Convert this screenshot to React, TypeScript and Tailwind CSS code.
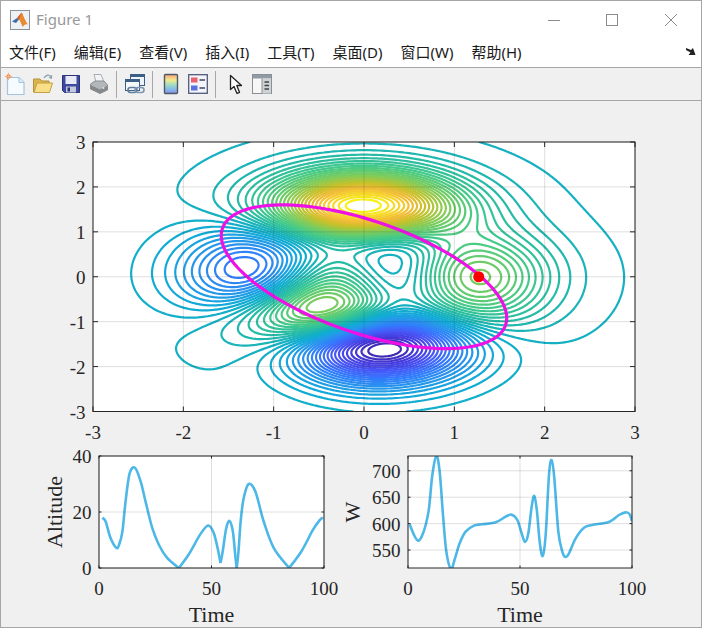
import type { ReactNode } from 'react';

const PARULA: [number, number, number, number][] = [
  [0, 0.2422, 0.1504, 0.6603],
  [0.08, 0.2751, 0.2342, 0.871],
  [0.16, 0.2795, 0.3447, 0.9717],
  [0.25, 0.1963, 0.4847, 0.9892],
  [0.33, 0.154, 0.5902, 0.9218],
  [0.4, 0.07, 0.67, 0.85],
  [0.45, 0.08, 0.69, 0.76],
  [0.52, 0.16, 0.74, 0.64],
  [0.6, 0.2809, 0.7964, 0.5266],
  [0.7, 0.5044, 0.7993, 0.348],
  [0.8, 0.78, 0.76, 0.16],
  [0.87, 0.95, 0.73, 0.22],
  [0.95, 0.97, 0.87, 0.15],
  [1, 0.9763, 0.9831, 0.0538],
];

function parula(t: number) {
  let i = 0;
  while (i < PARULA.length - 2 && t > PARULA[i + 1][0]) i++;
  const a = PARULA[i];
  const b = PARULA[i + 1];
  const f = (t - a[0]) / (b[0] - a[0]);
  const c = [1, 2, 3].map(k => Math.round((a[k] + (b[k] - a[k]) * f) * 255));
  return `rgb(${c[0]},${c[1]},${c[2]})`;
}

function peaks(x: number, y: number) {
  return (
    3 * (1 - x) ** 2 * Math.exp(-(x ** 2) - (y + 1) ** 2) -
    10 * (x / 5 - x ** 3 - y ** 5) * Math.exp(-(x ** 2) - y ** 2) -
    (1 / 3) * Math.exp(-((x + 1) ** 2) - y ** 2)
  );
}

const W_MAIN = 542;
const H_MAIN = 269.5;
const ZMIN = -6.5466;
const ZMAX = 8.0752;
const LEVEL_SHIFT = 0.012;
const N = 180;

function buildContours() {
  const grid: number[][] = [];
  for (let j = 0; j <= N; j++) {
    const row: number[] = [];
    for (let i = 0; i <= N; i++) row.push(peaks(-3 + (6 * i) / N, -3 + (6 * j) / N));
    grid.push(row);
  }
  const px = (i: number) => ((i / N) * W_MAIN).toFixed(2);
  const py = (j: number) => (H_MAIN - (j / N) * H_MAIN).toFixed(2);
  const out: { d: string; color: string }[] = [];
  for (let k = 1; k <= 50; k++) {
    const lv = ZMIN + ((ZMAX - ZMIN) * k) / 51 + LEVEL_SHIFT;
    const parts: string[] = [];
    for (let j = 0; j < N; j++) {
      for (let i = 0; i < N; i++) {
        const a = grid[j][i];
        const b = grid[j][i + 1];
        const c = grid[j + 1][i + 1];
        const d = grid[j + 1][i];
        const pts: string[] = [];
        if (a < lv !== b < lv) pts.push(`${px(i + (lv - a) / (b - a))} ${py(j)}`);
        if (b < lv !== c < lv) pts.push(`${px(i + 1)} ${py(j + (lv - b) / (c - b))}`);
        if (c < lv !== d < lv) pts.push(`${px(i + (lv - d) / (c - d))} ${py(j + 1)}`);
        if (d < lv !== a < lv) pts.push(`${px(i)} ${py(j + (lv - a) / (d - a))}`);
        if (pts.length === 2) parts.push(`M${pts[0]}L${pts[1]}`);
        if (pts.length === 4) parts.push(`M${pts[0]}L${pts[1]}M${pts[2]}L${pts[3]}`);
      }
    }
    out.push({ d: parts.join(''), color: parula((lv - ZMIN) / (ZMAX - ZMIN)) });
  }
  return out;
}

const CONTOURS = buildContours();

function ellipsePath() {
  let d = '';
  for (let a = 0; a <= 360; a += 3) {
    const t = (a * Math.PI) / 180;
    const x = 1.58 * Math.cos(t);
    const y = 1.6 * Math.cos(t + (125 * Math.PI) / 180);
    d += `${a ? 'L' : 'M'}${(((x + 3) / 6) * W_MAIN).toFixed(2)} ${(((3 - y) / 6) * H_MAIN).toFixed(2)}`;
  }
  return d + 'Z';
}

// smooth line through traced points
function smooth(points: number[][]) {
  let d = `M${points[0][0]} ${points[0][1]}`;
  for (let i = 0; i < points.length - 1; i++) {
    const p0 = points[Math.max(i - 1, 0)];
    const p1 = points[i];
    const p2 = points[i + 1];
    const p3 = points[Math.min(i + 2, points.length - 1)];
    const c1 = [p1[0] + (p2[0] - p0[0]) / 6, p1[1] + (p2[1] - p0[1]) / 6];
    const c2 = [p2[0] - (p3[0] - p1[0]) / 6, p2[1] - (p3[1] - p1[1]) / 6];
    d += `C${c1[0].toFixed(2)} ${c1[1].toFixed(2)} ${c2[0].toFixed(2)} ${c2[1].toFixed(2)} ${p2[0]} ${p2[1]}`;
  }
  return d;
}

const ALT_SEGMENTS = [
  [[1.5, 18], [3, 16.5], [5, 11], [7.7, 7.2], [9, 8.5], [10.4, 13], [11.8, 23.7], [13.6, 33.8], [16, 35.8], [18.5, 30.9], [20.7, 23.7], [23.7, 14.2], [26.6, 8.3], [30.3, 3.6], [35.5, 0]],
  [[35.5, 0], [40, 5], [45, 12], [48.5, 15.2], [51, 12.5], [53, 6], [54, 1.8]],
  [[54, 1.8], [55, 6], [56.5, 14], [58, 16.8], [59.5, 13], [60.5, 5], [61.2, 0]],
  [[61.2, 0], [62, 6], [63, 17], [64.3, 24.9], [66.5, 30], [69.5, 27.3], [73.2, 16.6], [77.7, 7.1], [84.5, 0]],
  [[84.5, 0], [90, 6], [95, 13.5], [98, 17], [99.5, 18]],
];

// traced in 3x crop pixels, converted to data below
const W_TRACE = [
  [222, 238], [235, 270], [247, 287], [258, 275], [270, 240], [280, 190], [290, 90], [302, 33], [312, 80], [322, 210],
  [332, 320], [346, 372], [358, 340], [372, 295], [390, 260], [415, 242], [440, 238], [480, 232], [510, 215], [528, 209],
  [545, 225], [558, 265], [568, 291], [578, 265], [588, 185], [596, 153], [604, 200], [612, 290], [621, 333], [630, 270],
  [640, 90], [648, 45], [656, 100], [668, 260], [680, 320], [689, 336], [700, 325], [720, 280], [745, 248], [770, 240],
  [820, 231], [850, 210], [870, 202], [882, 208], [889, 228],
];

type AxesProps = {
  w: number;
  h: number;
  xlim: [number, number];
  ylim: [number, number];
  xticks: number[];
  yticks: number[];
  tick: number;
  xlabel?: string;
  ylabel?: string;
  ylabelX?: number;
  clipId: string;
  className: string;
  children: ReactNode;
};

function Axes({ w, h, xlim, ylim, xticks, yticks, tick, xlabel, ylabel, ylabelX, clipId, className, children }: AxesProps) {
  const sx = (v: number) => ((v - xlim[0]) / (xlim[1] - xlim[0])) * w;
  const sy = (v: number) => h - ((v - ylim[0]) / (ylim[1] - ylim[0])) * h;
  return (
    <svg width={w} height={h} viewBox={`0 0 ${w} ${h}`} className={`block shrink-0 overflow-visible font-['Liberation_Serif'] ${className}`}>
      <defs>
        <clipPath id={clipId}>
          <rect width={w} height={h} />
        </clipPath>
      </defs>
      <rect width={w} height={h} fill="#fff" />
      <g clipPath={`url(#${clipId})`}>{children}</g>
      <g stroke="#262626" strokeOpacity="0.15" strokeWidth="1">
        {xticks.map(t => <line key={t} x1={sx(t)} x2={sx(t)} y1="0" y2={h} />)}
        {yticks.map(t => <line key={t} y1={sy(t)} y2={sy(t)} x1="0" x2={w} />)}
      </g>
      <g stroke="#262626" strokeWidth="1">
        {xticks.map(t => (
          <g key={t}>
            <line x1={sx(t)} x2={sx(t)} y1={h} y2={h - tick} />
            <line x1={sx(t)} x2={sx(t)} y1="0" y2={tick} />
          </g>
        ))}
        {yticks.map(t => (
          <g key={t}>
            <line y1={sy(t)} y2={sy(t)} x1="0" x2={tick} />
            <line y1={sy(t)} y2={sy(t)} x1={w} x2={w - tick} />
          </g>
        ))}
      </g>
      <rect x="0" y="0" width={w} height={h} fill="none" stroke="#262626" strokeWidth="1" />
      <g className="fill-[#262626] text-[19px]">
        {xticks.map(t => <text key={t} x={sx(t)} y={h + 27} textAnchor="middle">{t}</text>)}
        {yticks.map(t => <text key={t} x={-7.5} y={sy(t) + 7} textAnchor="end">{t}</text>)}
      </g>
      {xlabel && <text x={w / 2} y={h + 54} textAnchor="middle" className="fill-[#262626] text-[22px]">{xlabel}</text>}
      {ylabel && (
        <text transform={`translate(${ylabelX} ${h / 2}) rotate(-90)`} textAnchor="middle" className="fill-[#262626] text-[22px]">
          {ylabel}
        </text>
      )}
    </svg>
  );
}

function MatlabLogo() {
  return (
    <svg width="20" height="20" viewBox="0 0 20 20">
      <rect x="0.5" y="0.5" width="19" height="19" fill="#eef1f5" stroke="#8d9096" />
      <path d="M2 11.5 L7 8 L9 9.5 L6 13 Z" fill="#3f6fa8" />
      <path d="M7 8 L11.5 2.5 L13 5 L10 10 L9 9.5 Z" fill="#d8542a" />
      <path d="M11.5 2.5 C13.5 5 15 11 18 14.5 C15.5 13.5 14 15 12.5 17 C11.5 14 10.5 11.5 9 9.5 Z" fill="#e98a2c" />
    </svg>
  );
}

function NewIcon() {
  return (
    <svg width="22" height="24" viewBox="0 0 22 24">
      <path d="M3.5 5.5 H15 L20 10.5 V22.5 H3.5 Z" fill="#f6fbff" stroke="#a5c3dc" strokeWidth="1.2" />
      <path d="M15 5.5 V10.5 H20" fill="#dcecf7" stroke="#a5c3dc" />
      <circle cx="4.5" cy="4.5" r="2.2" fill="#ee8a4a" />
      <path d="M4.5 0.8 V8.2 M0.8 4.5 H8.2" stroke="#f3b27f" strokeWidth="1" />
    </svg>
  );
}

function OpenIcon() {
  return (
    <svg width="22" height="22" viewBox="0 0 22 22">
      <path d="M1.5 6 H8 L10 8 H17 V19 H1.5 Z" fill="#dcb44c" stroke="#b3913b" />
      <path d="M2 19.5 L5 10 H20.5 L17.5 19.5 Z" fill="#f7de87" stroke="#c2a043" />
      <path d="M12 5 C14 1.5 17 1.5 19 3.5" fill="none" stroke="#8fa3ad" strokeWidth="1.4" />
      <path d="M20.2 1.8 L20 6 L16.5 4.8 Z" fill="#8fa3ad" />
    </svg>
  );
}

function SaveIcon() {
  return (
    <svg width="20" height="20" viewBox="0 0 20 20">
      <path d="M1.5 1.5 H18.5 V18.5 H3.5 L1.5 16.5 Z" fill="#3e4aa0" stroke="#2b3378" />
      <rect x="4.5" y="2" width="11" height="8" fill="#e8ebf6" />
      <rect x="5" y="12.5" width="10" height="6" fill="#c4c8dc" />
      <rect x="6.5" y="13.5" width="2.5" height="4" fill="#2b3378" />
    </svg>
  );
}

function PrintIcon() {
  return (
    <svg width="20" height="22" viewBox="0 0 20 22">
      <path d="M5 1.5 H12 L15 9 H7 Z" fill="#f2f4f6" stroke="#a9adb1" />
      <path d="M1.5 11 L6 8 H15 L18.5 12 V17 L11 20.5 L1.5 16 Z" fill="#b4b7ba" stroke="#8b8e91" />
      <path d="M1.5 12 L11 16.5 L18.5 12.5 V16.5 L11 20.5 L1.5 16 Z" fill="#86898c" />
      <circle cx="14.5" cy="15" r="0.9" fill="#e6e8ea" />
    </svg>
  );
}

function LinkIcon() {
  return (
    <svg width="22" height="22" viewBox="0 0 22 22">
      <rect x="6.5" y="1.5" width="14" height="11" fill="#eef3f8" stroke="#3d5f85" />
      <rect x="6.5" y="1.5" width="14" height="2.5" fill="#3d5f85" />
      <rect x="1.5" y="6.5" width="14" height="11" fill="#f5f8fb" stroke="#3d5f85" />
      <rect x="1.5" y="6.5" width="14" height="2.5" fill="#3d5f85" />
      <rect x="4" y="14.5" width="9" height="5" rx="2.5" fill="none" stroke="#5e7c9c" strokeWidth="1.6" />
      <rect x="11" y="14.5" width="9" height="5" rx="2.5" fill="none" stroke="#7f96ae" strokeWidth="1.6" />
    </svg>
  );
}

function ColorbarIcon() {
  return (
    <svg width="16" height="22" viewBox="0 0 16 22">
      <defs>
        <linearGradient id="cb-grad" x1="0" y1="0" x2="0" y2="1">
          <stop offset="0" stopColor="#f8a27a" />
          <stop offset="0.3" stopColor="#f3ea8e" />
          <stop offset="0.55" stopColor="#9fdcc4" />
          <stop offset="0.8" stopColor="#83b6ee" />
          <stop offset="1" stopColor="#8c8ce0" />
        </linearGradient>
      </defs>
      <rect x="1.5" y="1.5" width="13" height="19" rx="1" fill="url(#cb-grad)" stroke="#4d5a68" strokeWidth="1.4" />
    </svg>
  );
}

function LegendIcon() {
  return (
    <svg width="20" height="20" viewBox="0 0 20 20">
      <rect x="0.7" y="0.7" width="18.6" height="18.6" fill="#f4f5fa" stroke="#4f5a7a" strokeWidth="1.3" />
      <rect x="3" y="3.5" width="6.5" height="5" fill="#e8606a" />
      <rect x="3" y="11.5" width="6.5" height="5" fill="#5a6fe0" />
      <path d="M11.5 6 H17 M11.5 14 H17" stroke="#3c4660" strokeWidth="1.6" />
    </svg>
  );
}

function CursorIcon() {
  return (
    <svg width="14" height="21" viewBox="0 0 14 21">
      <path d="M1.5 1.5 V15.5 L5 12.5 L8 19.5 L10.5 18.3 L7.8 11.5 L12.5 11.5 Z" fill="#fff" stroke="#222" strokeWidth="1.3" strokeLinejoin="round" />
    </svg>
  );
}

function BrowserIcon() {
  return (
    <svg width="20" height="20" viewBox="0 0 20 20">
      <rect x="0.5" y="0.5" width="19" height="19" fill="#f7f7f7" stroke="#8a9097" />
      <rect x="1" y="1" width="18" height="3.5" fill="#8f9aa5" />
      <rect x="10" y="4.5" width="9" height="15" fill="#cfd2d5" />
      <path d="M10 4.5 V19.5" stroke="#8a9097" />
      <path d="M12.5 8 H17 M12.5 11.5 H17 M12.5 15 H17" stroke="#3f4347" strokeWidth="1.4" />
    </svg>
  );
}

function Sep({ className }: { className: string }) {
  return <div className={`w-px h-[27px] bg-[#a8a8a8] shrink-0 ${className}`} />;
}

function Tool({ className, children }: { className: string; children: ReactNode }) {
  return <div className={`w-[22px] h-[26px] flex items-center justify-center shrink-0 ${className}`}>{children}</div>;
}

const MENUS = ['文件(F)', '编辑(E)', '查看(V)', '插入(I)', '工具(T)', '桌面(D)', '窗口(W)', '帮助(H)'];

export default function App() {
  const altScale = (s: number[][]) => s.map(([t, a]) => [(t / 100) * 225, 112 - (a / 40) * 112]);
  const wScale = W_TRACE.map(([x, y]) => [(x - 217) / 3, (y - 33) / 3]);

  return (
    <div className="w-[702px] h-[628px] overflow-hidden border border-[#a6a6a6] bg-[#f0f0f0] flex flex-col font-['Noto_Sans','Noto_Sans_CJK_SC',sans-serif]">
      <div className="h-[37px] bg-white flex items-center shrink-0">
        <div className="ml-[9px] mt-[1px]"><MatlabLogo /></div>
        <span className="ml-[6px] text-[15px] text-[#999999]">Figure 1</span>
        <div className="ml-auto mr-[1px] flex items-center">
          <div className="w-[58.5px] flex justify-center">
            <svg width="12" height="12" viewBox="0 0 12 12"><path d="M0 6.5 H12" stroke="#8c8c8c" /></svg>
          </div>
          <div className="w-[58.5px] flex justify-center">
            <svg width="12" height="12" viewBox="0 0 12 12"><rect x="0.5" y="0.5" width="11" height="11" fill="none" stroke="#8c8c8c" /></svg>
          </div>
          <div className="w-[58.5px] flex justify-center">
            <svg width="12" height="12" viewBox="0 0 12 12"><path d="M0 0 L12 12 M12 0 L0 12" stroke="#8c8c8c" /></svg>
          </div>
        </div>
      </div>

      <div className="h-[30px] bg-white border-b border-[#a6a6a6] flex items-center pl-[8px] pr-[5px] shrink-0 text-[15px] text-[#1a1a1a]">
        <div className="flex gap-[18px] mt-[-1px]">
          {MENUS.map(m => <span key={m} className="whitespace-nowrap">{m}</span>)}
        </div>
        <svg className="ml-auto mb-[2px]" width="10" height="9" viewBox="0 0 10 9">
          <path d="M0 1 L5 3 L7 1 L9.5 8 L2.5 8 L4.5 5.5 L0 3 Z" fill="#222" />
        </svg>
      </div>

      <div className="h-[33px] border-b border-[#a6a6a6] flex items-center shrink-0">
        <Tool className="ml-[3px]"><NewIcon /></Tool>
        <Tool className="ml-[6px]"><OpenIcon /></Tool>
        <Tool className="ml-[6px]"><SaveIcon /></Tool>
        <Tool className="ml-[6px]"><PrintIcon /></Tool>
        <Sep className="ml-[6px]" />
        <Tool className="ml-[7px]"><LinkIcon /></Tool>
        <Sep className="ml-[6px]" />
        <Tool className="ml-[7px]"><ColorbarIcon /></Tool>
        <Tool className="ml-[5px]"><LegendIcon /></Tool>
        <Sep className="ml-[6px]" />
        <Tool className="ml-[9px]"><CursorIcon /></Tool>
        <Tool className="ml-[4px]"><BrowserIcon /></Tool>
      </div>

      <div className="flex-1 flex flex-col">
        <Axes
          w={W_MAIN}
          h={H_MAIN}
          xlim={[-3, 3]}
          ylim={[-3, 3]}
          xticks={[-3, -2, -1, 0, 1, 2, 3]}
          yticks={[-3, -2, -1, 0, 1, 2, 3]}
          tick={5}
          clipId="clip-main"
          className="ml-[91.5px] mt-[40.5px]"
        >
          {CONTOURS.map(c => (
            <path key={c.color + c.d.length} d={c.d} fill="none" stroke={c.color} strokeWidth="2.2" strokeLinecap="round" />
          ))}
          <path d={ellipsePath()} fill="none" stroke="#ee11e6" strokeWidth="3.2" />
          <circle cx={((1.27 + 3) / 6) * W_MAIN} cy={H_MAIN / 2} r="5.5" fill="#ff0000" />
        </Axes>

        <div className="flex mt-[45px]">
          <Axes
            w={225}
            h={112}
            xlim={[0, 100]}
            ylim={[0, 40]}
            xticks={[0, 50, 100]}
            yticks={[0, 20, 40]}
            tick={2.5}
            xlabel="Time"
            ylabel="Altitude"
            ylabelX={-37.5}
            clipId="clip-alt"
            className="ml-[97.5px]"
          >
            {ALT_SEGMENTS.map((s, i) => (
              <path key={i} d={smooth(altScale(s))} fill="none" stroke="#4db8e8" strokeWidth="2.6" />
            ))}
          </Axes>
          <Axes
            w={224}
            h={112}
            xlim={[0, 100]}
            ylim={[516, 728]}
            xticks={[0, 50, 100]}
            yticks={[550, 600, 650, 700]}
            tick={2.5}
            xlabel="Time"
            ylabel="W"
            ylabelX={-48}
            clipId="clip-w"
            className="ml-[84px]"
          >
            <path d={smooth(wScale)} fill="none" stroke="#4db8e8" strokeWidth="2.6" />
          </Axes>
        </div>
      </div>
    </div>
  );
}
